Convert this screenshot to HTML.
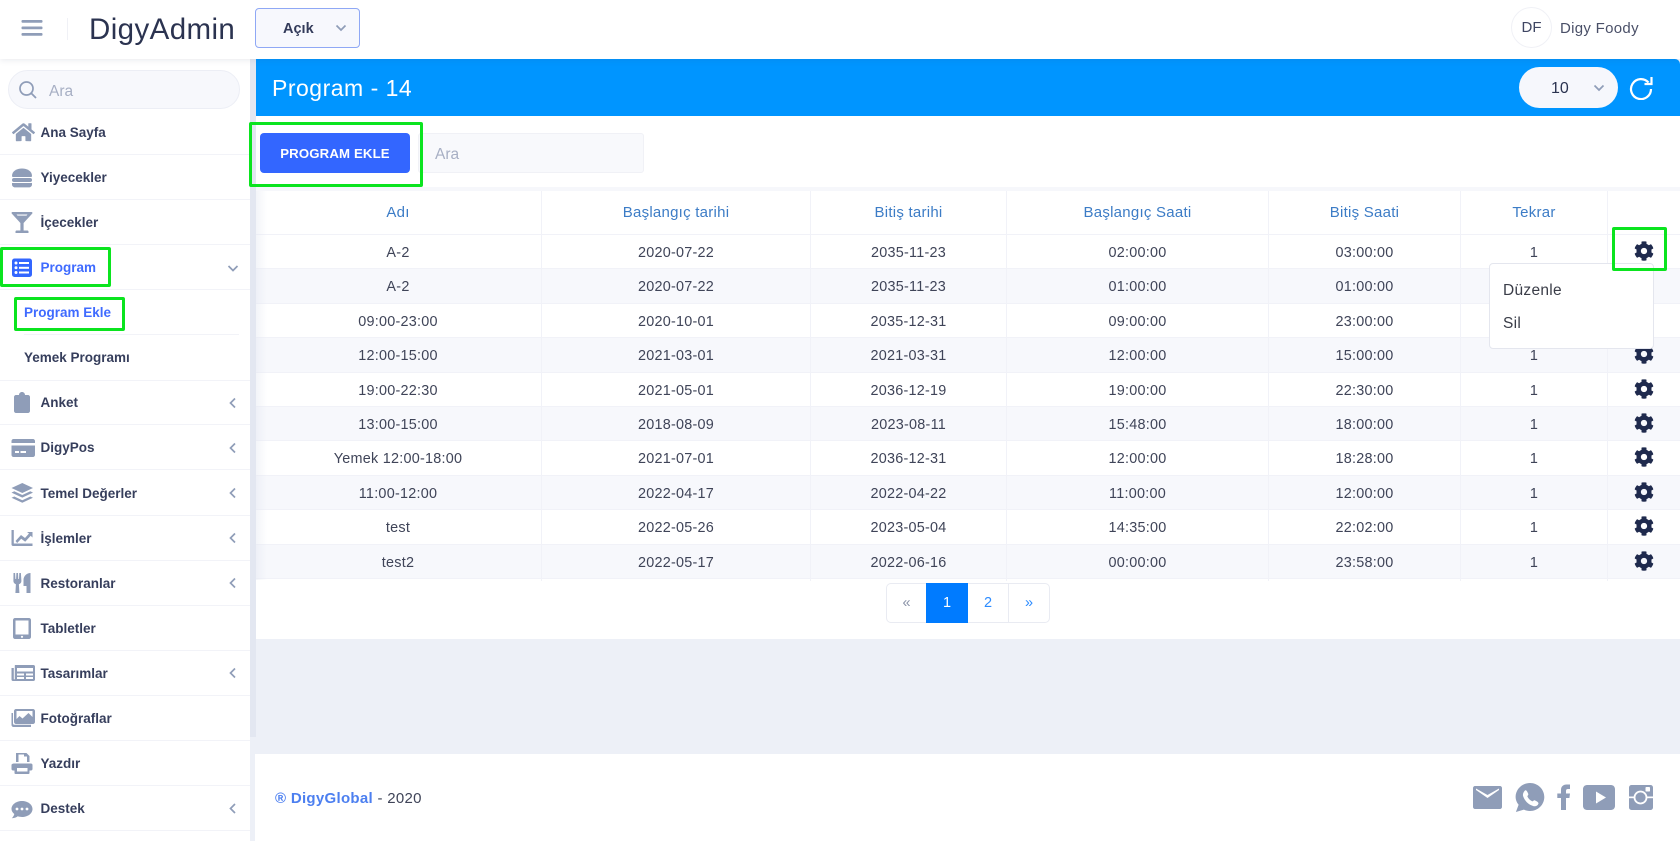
<!DOCTYPE html>
<html lang="tr"><head><meta charset="utf-8"><title>DigyAdmin</title>
<style>
*{box-sizing:border-box}
html,body{margin:0;padding:0;width:1680px;height:841px;overflow:hidden;background:#edf0f7;font-family:"Liberation Sans","Noto Sans CJK JP",sans-serif;color:#3f4458}
.a{position:absolute;white-space:nowrap}
.side{position:absolute;left:0;top:59px;width:250px;height:782px;background:#fff}
.m{position:absolute;left:0;width:250px;height:45.15px;line-height:46.5px;border-bottom:1px solid #f2f3f8;padding-left:40.5px;font-weight:700;font-size:13.5px;color:#363e5c}
.m.sub{left:24px;width:215px;padding-left:0}
.g{position:absolute;border:3px solid #0be41f;border-radius:2px}
.tb{position:absolute;left:255px;top:191px;width:1425px}
.r{display:grid;grid-template-columns:287px 269px 196px 262px 192px 147px 72px;height:34.4px;line-height:36px;font-size:14.4px;letter-spacing:.25px;text-align:center;border-bottom:1px solid #f1f2f8}
.r.h{height:44px;line-height:43px;color:#3c7cc6;font-size:15px}
.r:nth-child(odd):not(.h){background:#f7f8fc}
.r>div{border-right:1px solid #f1f2f8}
.r>div:last-child{border-right:0}
.r svg{width:20px;height:20px;fill:#1f2a4d;margin:6px auto 0;display:block}
.ch{fill:none;stroke:#8f9db8;stroke-width:1.7}
</style></head><body>

<!-- header -->
<div class="a" style="left:0;top:0;width:1680px;height:59px;background:#fff;box-shadow:0 1px 6px rgba(60,70,110,.12);z-index:3"></div>
<div style="position:absolute;left:0;top:0;width:1680px;height:60px;z-index:4">
<svg class="a" style="left:20px;top:18px" width="24" height="20"><g fill="#8f9db8"><rect x="1.5" y="2" width="21" height="2.700" rx="1"/><rect x="1.500" y="8.500" width="21" height="2.700" rx="1"/><rect x="1.500" y="15" width="21" height="2.700" rx="1"/></g></svg>
<div class="a" style="left:67px;top:18px;width:1px;height:22px;background:#f0f1f6"></div>
<div class="a" style="left:89px;top:9px;line-height:42px;font-size:29.500px;color:#2b3350;letter-spacing:.4px">DigyAdmin</div>
<div class="a" style="left:255px;top:8px;width:105px;height:40px;background:#f7f8fd;border:1px solid #8fa8f5;border-radius:4px"></div>
<div class="a" style="left:283px;top:9px;line-height:41px;font-size:14.500px;font-weight:700;color:#333b5a">Açık</div>
<svg class="a" style="left:335px;top:24px" width="12" height="8"><path class="ch" d="M1.500 1.500l4.500 4.500 4.500-4.500"/></svg>
<div class="a" style="left:1511px;top:7px;width:41px;height:41px;border:1px solid #f0f1f6;border-radius:50%;text-align:center;line-height:40px;font-size:15px;color:#3f4663">DF</div>
<div class="a" style="left:1560px;top:8px;line-height:41px;font-size:15px;letter-spacing:.3px;color:#4a5068">Digy Foody</div>
</div>

<!-- sidebar -->
<div class="a" style="left:250px;top:59px;width:6px;height:678px;background:#e3e7f1;z-index:2"></div>
<div class="side"></div>
<div class="a" style="left:7.500px;top:70px;width:232px;height:39px;background:#f7f8fc;border:1px solid #eceef5;border-radius:20px"></div>
<div class="a" style="left:49px;top:71px;line-height:41px;font-size:15.500px;color:#a7afc4">Ara</div>
<svg class="a" style="left:18px;top:80px" width="20" height="20"><circle cx="8.500" cy="8.500" r="6.500" fill="none" stroke="#8f9db8" stroke-width="1.700"/><path d="M13 13l5 5" stroke="#8f9db8" stroke-width="1.800"/></svg>

<div class="m" style="top:110px">Ana Sayfa</div>
<div class="m" style="top:155px">Yiyecekler</div>
<div class="m" style="top:200px">İçecekler</div>
<div class="m" style="top:245px;color:#3f6bff">Program</div>
<div class="m sub" style="top:290px;color:#3f6bff">Program Ekle</div>
<div class="m sub" style="top:335px;border-bottom:0">Yemek Programı</div>
<div class="a" style="left:0;top:380px;width:250px;height:1px;background:#f2f3f8"></div>
<div class="m" style="top:380px">Anket</div>
<div class="m" style="top:425px">DigyPos</div>
<div class="m" style="top:470.500px">Temel Değerler</div>
<div class="m" style="top:515.500px">İşlemler</div>
<div class="m" style="top:560.500px">Restoranlar</div>
<div class="m" style="top:605.600px">Tabletler</div>
<div class="m" style="top:650.700px">Tasarımlar</div>
<div class="m" style="top:695.800px">Fotoğraflar</div>
<div class="m" style="top:741px">Yazdır</div>
<div class="m" style="top:786px">Destek</div>

<svg class="a" style="left:0;top:0;z-index:2" width="250" height="841">
<g fill="#8f9db8">
<svg x="12" y="122" width="23" height="20.500" viewBox="0 0 576 512"><path d="M280.37 148.26L96 300.11V464a16 16 0 0 0 16 16l112.06-.29a16 16 0 0 0 15.92-16V368a16 16 0 0 1 16-16h64a16 16 0 0 1 16 16v95.64a16 16 0 0 0 16 16.05L464 480a16 16 0 0 0 16-16V300L295.67 148.26a12.19 12.19 0 0 0-15.3 0zM571.6 251.47L488 182.56V44.05a12 12 0 0 0-12-12h-56a12 12 0 0 0-12 12v72.61L318.47 43a48 48 0 0 0-61 0L4.34 251.47a12 12 0 0 0-1.6 16.9l25.5 31A12 12 0 0 0 45.15 301l235.22-193.74a12.19 12.19 0 0 1 15.3 0L530.9 301a12 12 0 0 0 16.9-1.6l25.500-31a12 12 0 0 0-1.700-16.93z"/></svg>
<!-- burger -->
<path d="M12 176c0-4.800 4.500-7.500 10-7.500s10 2.700 10 7.500c0 .6-.4 1-1 1H13c-.6 0-1-.4-1-1z"/><rect x="12" y="178" width="20" height="4" rx="2"/><path d="M12 183h20v1.500c0 1.600-1.300 2.900-3 2.900H15c-1.700 0-3-1.300-3-2.900z"/>
<!-- glass -->
<path d="M12.500 212h19c.9 0 1.300 1 .7 1.600L23.600 223v7.500h3.900c.6 0 1 .5 1 1.100v1.400h-13v-1.400c0-.6.400-1.100 1-1.100h3.900V223l-8.600-9.400c-.6-.6-.2-1.600.7-1.600zM16.500 214.500l1 1.100h9l1-1.100z" fill-rule="evenodd"/>
<!-- clipboard -->
<path d="M16 395h3c0-1.700 1.300-3 3-3s3 1.300 3 3h3c1.100 0 2 .9 2 2v14c0 1.100-.9 2-2 2H16c-1.100 0-2-.9-2-2v-14c0-1.100.9-2 2-2z"/>
<!-- card -->
<path d="M13.500 439h19.500c1.100 0 2 .9 2 2v2H11.500v-2c0-1.100.9-2 2-2zM11.500 445.500H35v9.500c0 1.100-.9 2-2 2H13.500c-1.100 0-2-.9-2-2z"/>
<rect x="15" y="451" width="4" height="2" fill="#fff"/><rect x="20.500" y="451" width="5.500" height="2" fill="#fff"/>
<!-- layers -->
<path d="M22.300 483l10.700 5-10.700 5-10.800-5z"/><path d="M14.300 491.300l8 3.700 8-3.700 2.700 1.300-10.700 5-10.800-5z"/><path d="M14.300 496.500l8 3.700 8-3.700 2.700 1.300-10.700 5-10.800-5z"/>
<!-- chart -->
<path d="M11.500 530h2.300v13.500H32.500v2.500H13c-.8 0-1.500-.7-1.500-1.500z"/>
<path d="M15.500 541l5.500-6 4 3 4-4.500-2-1.500h5.500v5.500l-1.800-1.800-5.500 6-4-3-4 4.300z"/>
<!-- utensils -->
<path d="M13.500 573h1.600l.3 6h.7l.3-6h1.600l.3 6h.7l.3-6h1.600l.5 8c0 1.700-1 2.700-2.500 3.200l.5 8.800h-4l.5-8.800c-1.500-.5-2.500-1.500-2.500-3.200z"/>
<path d="M30.500 573v20h-4v-7h-3v-6c0-4 3.300-7 7-7z"/>
<!-- tablet -->
<path d="M15 618h14c1.100 0 2 .9 2 2v17c0 1.100-.9 2-2 2H15c-1.100 0-2-.9-2-2v-17c0-1.100.9-2 2-2zm.5 2.500v14h13v-14z" fill-rule="evenodd"/><circle cx="22" cy="636.800" r="1.100" fill="#fff"/>
<!-- news -->
<path d="M15 665h18.500c.8 0 1.500.7 1.500 1.500v13c0 .8-.7 1.500-1.500 1.500H13c-.9 0-1.500-.6-1.500-1.500V668h2.300v11c0 .5 1 .5 1 0v-12.500c0-.8 0-1.500.2-1.500zM17 668v3.500h16V668zM17 673.500v2h7v-2zM26 673.500v2h7v-2zM17 677v2h7v-2zM26 677v2h7v-2z" fill-rule="evenodd"/>
<!-- images -->
<path d="M16 709h17c1.100 0 2 .9 2 2v11c0 1.100-.9 2-2 2H16c-1.100 0-2-.9-2-2v-11c0-1.100.9-2 2-2zM16.500 711v8l3-3 3 2.500 6-5.500 4 4v-6z" fill-rule="evenodd"/><circle cx="20" cy="713.500" r="1.700" fill="#fff"/>
<path d="M11.500 713h1.500v10.500c0 .7.600 1.300 1.300 1.300H31v2.200H13.500c-1.100 0-2-.9-2-2z"/>
<!-- print -->
<path d="M16 753h10.500l3 3v6h-2.500v-5.500h-3V754.500H18.500V762H16z"/><path d="M14 763.500h17c.8 0 1.500.7 1.500 1.500v4c0 .8-.7 1.500-1.500 1.500h-1.500V773c0 .6-.4 1-1 1H15.500c-.6 0-1-.4-1-1v-2.500H13c-.8 0-1.500-.7-1.500-1.500v-4c0-.8 1-1.500 2.500-1.500zM17 768v3.500h10.500V768z" fill-rule="evenodd"/>
<!-- comment -->
<path d="M22 801c5.800 0 10.500 3.500 10.500 8s-4.700 8-10.500 8c-1.500 0-2.900-.2-4.200-.7-1.300 1-3.300 1.900-6 1.900 1.300-1.300 2.200-2.700 2.500-4.200-1.800-1.400-2.800-3.200-2.800-5 0-4.500 4.700-8 10.500-8z"/>
<circle cx="17" cy="809" r="1.400" fill="#fff"/><circle cx="22" cy="809" r="1.400" fill="#fff"/><circle cx="27" cy="809" r="1.400" fill="#fff"/>
</g>
<!-- list icon -->
<rect x="12" y="258.500" width="20" height="18.500" rx="2.500" fill="#3366ff"/>
<g fill="#fff"><circle cx="16" cy="263" r="1.500"/><circle cx="16" cy="267.800" r="1.500"/><circle cx="16" cy="272.500" r="1.500"/><rect x="19" y="262" width="10" height="2"/><rect x="19" y="266.800" width="10" height="2"/><rect x="19" y="271.500" width="10" height="2"/></g>
<path class="ch" d="M228.500 266l4.500 4.500 4.500-4.500"/>
<g class="ch"><path d="M235 398.500l-4.500 4.500 4.500 4.500"/><path d="M235 443.500l-4.500 4.500 4.500 4.500"/><path d="M235 488.500l-4.500 4.500 4.500 4.500"/><path d="M235 533.500l-4.500 4.500 4.500 4.500"/><path d="M235 578.500l-4.500 4.500 4.500 4.500"/><path d="M235 668.500l-4.500 4.500 4.500 4.500"/><path d="M235 804l-4.500 4.500 4.500 4.500"/></g>
</svg>

<!-- blue bar -->
<div class="a" style="left:255px;top:59px;width:1425px;height:57px;background:#0095ff;border-top-right-radius:5px"></div>
<div class="a" style="left:272px;top:60px;line-height:57px;font-size:23px;color:#fff;letter-spacing:.5px">Program - 14</div>
<div class="a" style="left:1519px;top:67px;width:99px;height:41px;background:#f6f7fc;border-radius:21px"></div>
<div class="a" style="left:1551px;top:67px;line-height:43px;font-size:16px;font-weight:400;color:#2b3350">10</div>
<svg class="a" style="left:1593px;top:84px" width="12" height="8"><path class="ch" d="M1.500 1.500l4.500 4.500 4.500-4.500"/></svg>
<svg class="a" style="left:1628px;top:75px" width="26" height="25" fill="none" stroke="#fff" stroke-width="2.200"><path d="M20.500 7.500A10 10 0 1 0 23 14"/><path d="M23.500 2v7h-7"/></svg>

<!-- content -->
<div class="a" style="left:255px;top:116px;width:1425px;height:523px;background:#fff"></div>
<div class="a" style="left:255px;top:187px;width:1425px;height:4px;background:#f6f7fb"></div>
<div class="a" style="left:260px;top:133px;width:150px;height:40px;background:#3366ff;border-radius:4px;color:#fff;font-weight:700;font-size:13.200px;line-height:42px;text-align:center;letter-spacing:.15px">PROGRAM EKLE</div>
<div class="a" style="left:418px;top:133px;width:226px;height:40px;background:#f8f9fc;border:1px solid #f0f1f6;border-radius:3px"></div>
<div class="a" style="left:435px;top:134px;line-height:41px;font-size:15.500px;color:#a7afc4">Ara</div>

<div class="tb">
<div class="r h"><div>Adı</div><div>Başlangıç tarihi</div><div>Bitiş tarihi</div><div>Başlangıç Saati</div><div>Bitiş Saati</div><div>Tekrar</div><div></div></div>
<div class="r"><div>A-2</div><div>2020-07-22</div><div>2035-11-23</div><div>02:00:00</div><div>03:00:00</div><div>1</div><div><svg viewBox="0 0 512 512"><use href="#cog"/></svg></div></div>
<div class="r"><div>A-2</div><div>2020-07-22</div><div>2035-11-23</div><div>01:00:00</div><div>01:00:00</div><div>1</div><div></div></div>
<div class="r"><div>09:00-23:00</div><div>2020-10-01</div><div>2035-12-31</div><div>09:00:00</div><div>23:00:00</div><div>1</div><div></div></div>
<div class="r"><div>12:00-15:00</div><div>2021-03-01</div><div>2021-03-31</div><div>12:00:00</div><div>15:00:00</div><div>1</div><div><svg viewBox="0 0 512 512"><use href="#cog"/></svg></div></div>
<div class="r"><div>19:00-22:30</div><div>2021-05-01</div><div>2036-12-19</div><div>19:00:00</div><div>22:30:00</div><div>1</div><div><svg viewBox="0 0 512 512"><use href="#cog"/></svg></div></div>
<div class="r"><div>13:00-15:00</div><div>2018-08-09</div><div>2023-08-11</div><div>15:48:00</div><div>18:00:00</div><div>1</div><div><svg viewBox="0 0 512 512"><use href="#cog"/></svg></div></div>
<div class="r"><div>Yemek 12:00-18:00</div><div>2021-07-01</div><div>2036-12-31</div><div>12:00:00</div><div>18:28:00</div><div>1</div><div><svg viewBox="0 0 512 512"><use href="#cog"/></svg></div></div>
<div class="r"><div>11:00-12:00</div><div>2022-04-17</div><div>2022-04-22</div><div>11:00:00</div><div>12:00:00</div><div>1</div><div><svg viewBox="0 0 512 512"><use href="#cog"/></svg></div></div>
<div class="r"><div>test</div><div>2022-05-26</div><div>2023-05-04</div><div>14:35:00</div><div>22:02:00</div><div>1</div><div><svg viewBox="0 0 512 512"><use href="#cog"/></svg></div></div>
<div class="r"><div>test2</div><div>2022-05-17</div><div>2022-06-16</div><div>00:00:00</div><div>23:58:00</div><div>1</div><div><svg viewBox="0 0 512 512"><use href="#cog"/></svg></div></div>
</div>
<div class="a" style="left:255px;top:191px;width:12px;height:389px;background:linear-gradient(90deg,rgba(225,229,240,.45),rgba(225,229,240,0))"></div>
<svg width="0" height="0" style="position:absolute"><defs><path id="cog" d="M487.4 315.7l-42.6-24.6c4.3-23.2 4.3-47 0-70.2l42.6-24.6c4.9-2.8 7.1-8.6 5.5-14-11.1-35.6-30-67.8-54.7-94.6-3.8-4.1-10-5.1-14.8-2.3L380.8 110c-17.9-15.4-38.5-27.3-60.8-35.1V25.8c0-5.6-3.9-10.5-9.4-11.7-36.7-8.2-74.3-7.8-109.2 0-5.5 1.2-9.4 6.1-9.4 11.7V75c-22.2 7.9-42.8 19.8-60.8 35.1L88.7 85.5c-4.9-2.8-11-1.9-14.8 2.3-24.7 26.7-43.6 58.9-54.7 94.6-1.7 5.4.6 11.2 5.5 14L67.3 221c-4.3 23.2-4.3 47 0 70.2l-42.6 24.6c-4.9 2.8-7.1 8.6-5.5 14 11.1 35.6 30 67.8 54.7 94.6 3.8 4.1 10 5.1 14.8 2.3l42.6-24.6c17.9 15.4 38.5 27.3 60.8 35.1v49.2c0 5.6 3.9 10.5 9.4 11.7 36.7 8.2 74.3 7.8 109.2 0 5.5-1.2 9.4-6.1 9.4-11.7v-49.2c22.2-7.9 42.8-19.8 60.8-35.1l42.6 24.6c4.9 2.8 11 1.9 14.8-2.3 24.7-26.7 43.6-58.9 54.7-94.6 1.5-5.5-.7-11.3-5.6-14.1zM256 336c-44.1 0-80-35.9-80-80s35.9-80 80-80 80 35.9 80 80-35.9 80-80 80z"/></defs></svg>

<!-- dropdown -->
<div class="a" style="left:1489px;top:263px;width:165px;height:86px;background:#fff;border:1px solid #e4e6ee;border-radius:4px;z-index:2"></div>
<div class="a" style="left:1503px;top:278.500px;line-height:24px;font-size:15.500px;letter-spacing:.3px;color:#3a3d48;z-index:2">Düzenle</div>
<div class="a" style="left:1503px;top:311.500px;line-height:24px;font-size:15.500px;letter-spacing:.3px;color:#3a3d48;z-index:2">Sil</div>

<!-- pagination -->
<div class="a" style="left:886px;top:583px;width:164px;height:40px;background:#fff;border:1px solid #e9ebf2;border-radius:5px"></div>
<div class="a" style="left:926px;top:583px;width:42px;height:40px;background:#007bff;color:#fff;text-align:center;line-height:41px;font-size:14.500px">1</div>
<div class="a" style="left:1008px;top:583px;width:1px;height:40px;background:#e9ebf2"></div>
<div class="a" style="left:887px;top:583px;width:39px;text-align:center;line-height:41px;font-size:14.500px;color:#8a93a8">«</div>
<div class="a" style="left:968px;top:583px;width:40px;text-align:center;line-height:41px;font-size:14.500px;color:#2d8cff">2</div>
<div class="a" style="left:1009px;top:583px;width:40px;text-align:center;line-height:41px;font-size:14.500px;color:#2d8cff">»</div>

<!-- footer -->
<div class="a" style="left:255px;top:754px;width:1425px;height:87px;background:#fff"></div>
<div class="a" style="left:275px;top:778px;line-height:42px;font-size:15px;letter-spacing:.3px;color:#3f4458"><b style="color:#4c7ff0">® DigyGlobal</b> - 2020</div>
<svg class="a" style="left:0;top:0" width="1680" height="841"><g fill="#8f9db8">
<path d="M1475 786h25c1.100 0 2 .9 2 2v19c0 1.100-.9 2-2 2h-25c-1.100 0-2-.9-2-2v-19c0-1.100.9-2 2-2zM1476 790l11.500 8 11.500-8v-1.500l-11.500 6.500-11.500-6.500z" fill-rule="evenodd"/>
<path d="M1530 783c8 0 14.300 6.300 14.300 14s-6.300 14-14.300 14c-2.200 0-4.300-.5-6.100-1.400l-8 2.400 2.700-7.200c-1.900-2.300-3-5.100-3-7.800 0-7.700 6.400-14 14.400-14z"/>
<path d="M1525 790.500c1.500-1 2.700 2 3.300 3.500.3 1-1.300 2-.8 2.800 1 2 2.500 3.500 4.600 4.500.9.400 1.800-1.400 2.800-.9 1.500.7 4 2 3.500 3.300-.7 2-3 3-5 2.400-5-1.400-8.700-5.200-10.300-10-.6-2 .5-4.300 1.900-5.600z" fill="#fff"/>
<path d="M1561 810v-12h-3.700v-4.500h3.700v-3.500c0-3.500 2.200-5.500 5.500-5.500h3.500v4.500h-2c-1.500 0-2 .7-2 2v2.500h4l-.6 4.500h-3.400v12z"/>
<path d="M1587 785h24c2.200 0 4 1.800 4 4v17c0 2.200-1.800 4-4 4h-24c-2.200 0-4-1.800-4-4v-17c0-2.200 1.800-4 4-4zM1596 791.500v12l10-6z" fill-rule="evenodd"/>
<rect x="1629" y="785" width="24" height="25" rx="2.500"/>
<rect x="1629" y="796.500" width="24" height="1.700" fill="#fff"/>
<circle cx="1640.500" cy="797.500" r="6" fill="#8f9db8" stroke="#fff" stroke-width="1.800"/>
<rect x="1645.500" y="787" width="4.500" height="4.500" rx=".8" fill="#fff"/>
</g></svg>

<!-- green annotation boxes -->
<div class="g" style="left:249px;top:122px;width:174px;height:65px;z-index:5"></div>
<div class="g" style="left:0;top:247px;width:111px;height:40px;z-index:5"></div>
<div class="g" style="left:14px;top:297px;width:111px;height:34px;z-index:5"></div>
<div class="g" style="left:1612px;top:227px;width:55px;height:44px;z-index:5"></div>
</body></html>
